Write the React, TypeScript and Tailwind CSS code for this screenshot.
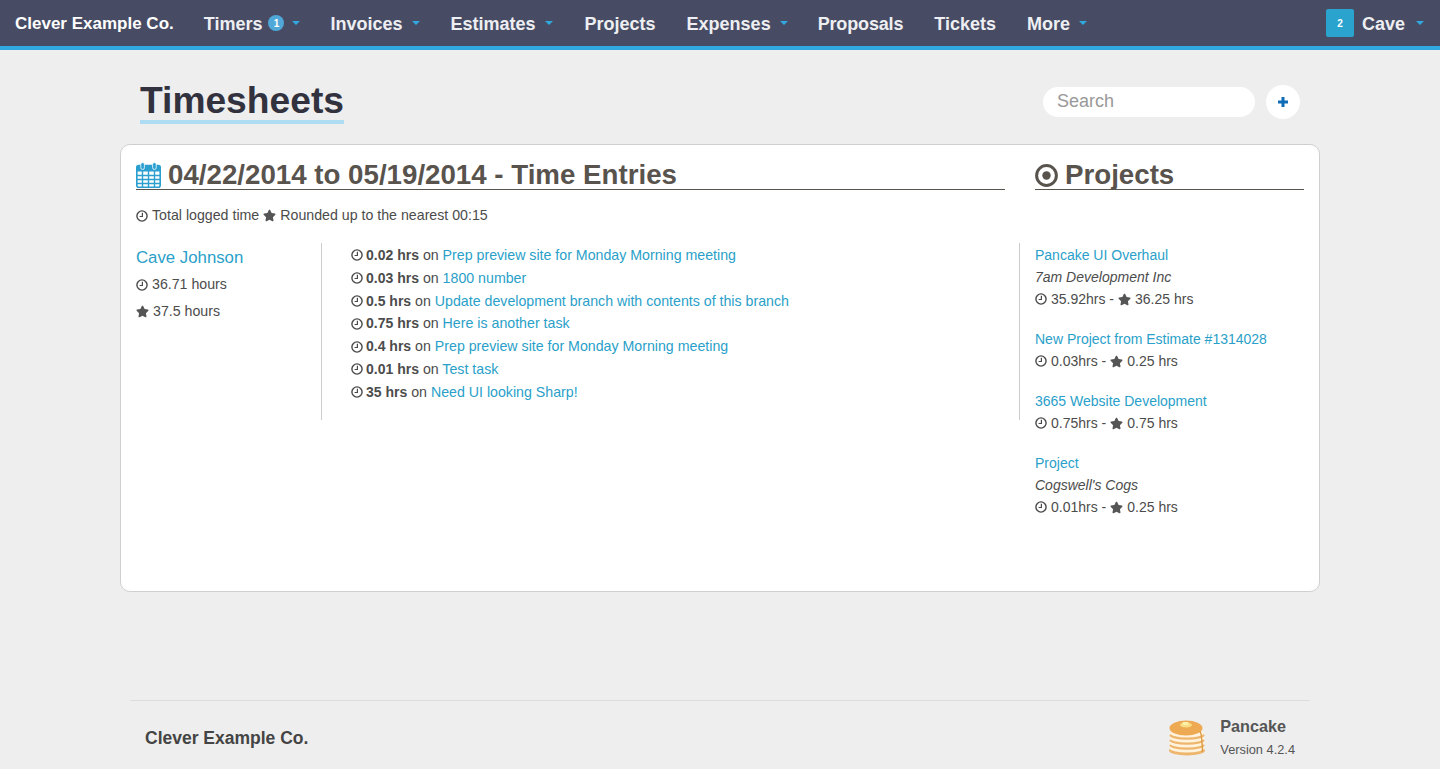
import { FaStar } from "react-icons/fa";

const navItems = [
  { label: "Timers", caret: true, badge: "1", extra: "mr-[-1px]" },
  { label: "Invoices", caret: true },
  { label: "Estimates", caret: true, extra: "mr-[1px]" },
  { label: "Projects" },
  { label: "Expenses", caret: true, extra: "mr-[-1px]" },
  { label: "Proposals", extra: "tracking-[-0.15px]" },
  { label: "Tickets" },
  { label: "More", caret: true },
];

const entries = [
  { hrs: "0.02 hrs", task: "Prep preview site for Monday Morning meeting" },
  { hrs: "0.03 hrs", task: "1800 number" },
  { hrs: "0.5 hrs", task: "Update development branch with contents of this branch" },
  { hrs: "0.75 hrs", task: "Here is another task" },
  { hrs: "0.4 hrs", task: "Prep preview site for Monday Morning meeting" },
  { hrs: "0.01 hrs", task: "Test task" },
  { hrs: "35 hrs", task: "Need UI looking Sharp!" },
];

const projects = [
  { name: "Pancake UI Overhaul", client: "7am Development Inc", logged: "35.92hrs", rounded: "36.25 hrs" },
  { name: "New Project from Estimate #1314028", logged: "0.03hrs", rounded: "0.25 hrs" },
  { name: "3665 Website Development", logged: "0.75hrs", rounded: "0.75 hrs" },
  { name: "Project", client: "Cogswell's Cogs", logged: "0.01hrs", rounded: "0.25 hrs" },
];

function Caret({ className = "ml-[9px]" }: { className?: string }) {
  return <span className={`${className} mt-[-3px] h-0 w-0 border-x-[4px] border-t-[4px] border-x-transparent border-t-[#2fa9e0]`} />;
}

function Clock() {
  return (
    <svg width="12" height="12" viewBox="0 0 12 12" className="shrink-0">
      <circle cx="6" cy="6" r="5.1" fill="none" stroke="#4a4a4a" strokeWidth="1.4" />
      <path d="M6.4 2.8v3.7H3.6" fill="none" stroke="#4a4a4a" strokeWidth="1.2" />
    </svg>
  );
}

function Star() {
  return <FaStar className="shrink-0 text-[13px] text-[#555]" />;
}

function TargetIcon() {
  return (
    <svg width="23" height="23" viewBox="0 0 23 23" className="mb-[2px] mr-[7px] shrink-0">
      <circle cx="11.5" cy="11.5" r="9.9" fill="none" stroke="#59534e" strokeWidth="3" />
      <circle cx="11.5" cy="11.5" r="4.2" fill="#59534e" />
    </svg>
  );
}

function CalendarIcon() {
  return (
    <svg width="25" height="26" viewBox="0 0 25 26" className="mb-[1px] mr-[7px] shrink-0">
      <rect x="0.8" y="3.5" width="23.4" height="21.7" rx="2" fill="#fff" stroke="#2a9fd0" strokeWidth="1.6" />
      <rect x="0.8" y="3.5" width="23.4" height="6" fill="#2a9fd0" />
      <path d="M1 13.5h23M1 17.5h23M1 21.5h23M6.5 9v16M12.5 9v16M18.5 9v16" stroke="#2a9fd0" strokeWidth="1.4" />
      <rect x="4.8" y="0.5" width="3.6" height="7" rx="1.8" fill="#2a9fd0" stroke="#fff" strokeWidth="0.8" />
      <rect x="16.6" y="0.5" width="3.6" height="7" rx="1.8" fill="#2a9fd0" stroke="#fff" strokeWidth="0.8" />
    </svg>
  );
}

function PancakeIcon() {
  return (
    <svg width="38" height="36" viewBox="0 0 38 36">
      <ellipse cx="19" cy="30.5" rx="18" ry="5" fill="#eeb56c" />
      <ellipse cx="19" cy="28.2" rx="17.5" ry="4.2" fill="#fff3de" />
      <ellipse cx="19" cy="25.5" rx="17.5" ry="4.2" fill="#eeb56c" />
      <ellipse cx="19" cy="23.2" rx="17.5" ry="4.2" fill="#fff3de" />
      <ellipse cx="19" cy="20.5" rx="17.5" ry="4.2" fill="#eeb56c" />
      <ellipse cx="19" cy="18.2" rx="17.5" ry="4.2" fill="#fff3de" />
      <ellipse cx="19" cy="15.5" rx="17.5" ry="4.2" fill="#eeb56c" />
      <ellipse cx="19" cy="13.2" rx="17" ry="4.2" fill="#fff3de" />
      <ellipse cx="18" cy="8" rx="16.5" ry="7.5" fill="#eeaa52" />
      <ellipse cx="18" cy="5" rx="6" ry="2.5" fill="#f8dd84" />
      <rect x="14.5" y="2" width="6" height="3" rx="1" fill="#fdf0a8" />
      <path d="M32 11c2 4 1.5 8 2 12s1 6 0 9" fill="none" stroke="#dc9a45" strokeWidth="1.4" />
    </svg>
  );
}

function SectionTitle({ icon, children }: { icon: React.ReactNode; children: React.ReactNode }) {
  return (
    <h2 className="flex h-[45px] items-end border-b border-[#59534e] text-[27.7px] leading-[28px] font-bold text-[#59534e]">
      {icon}
      {children}
    </h2>
  );
}

export default function App() {
  return (
    <div className="flex min-h-[769px] flex-col bg-[#eeeeee] font-['Liberation_Sans',Arial,sans-serif] text-[14.2px] text-[#4c4c4c]">
      <nav className="flex h-[50px] items-center border-b-[4px] border-[#2fa9e0] bg-[#474c64] pl-[15px] pr-[16px] pt-[2px] text-[18px] font-bold text-[#eeeff2]">
        <span className="mr-[30px] text-[17px] text-white">Clever Example Co.</span>
        <div className="flex items-center gap-[31px]">
          {navItems.map((item) => (
            <span key={item.label} className={`flex items-center ${item.extra ?? ""}`}>
              {item.label}
              {item.badge && (
                <span className="ml-[6px] mr-[-1px] mt-[-2px] flex h-[16px] w-[16px] items-center justify-center rounded-full bg-[#4fa8d8] text-[10px] text-white">
                  {item.badge}
                </span>
              )}
              {item.caret && <Caret />}
            </span>
          ))}
        </div>
        <div className="ml-auto flex items-center">
          <span className="mr-[8px] mt-[-2px] flex h-[28px] w-[28px] items-center justify-center rounded-[2px] bg-[#2aa3cf] text-[10px] text-white">2</span>
          Cave
          <Caret className="ml-[11px]" />
        </div>
      </nav>

      <header className="mx-auto flex h-[94px] w-[1160px] items-start justify-between pt-[31px]">
        <h1 className="border-b-[4px] border-[#aedcf3] text-[37.2px] leading-[39px] font-bold text-[#32323f]">Timesheets</h1>
        <div className="mt-[4px] flex items-center gap-[11px]">
          <div className="flex h-[30px] w-[212px] items-center rounded-full bg-white pb-[2px] pl-[14px] text-[18px] font-normal text-[#999]">Search</div>
          <div className="flex h-[34px] w-[34px] items-center justify-center rounded-full bg-white">
            <svg width="10" height="10" viewBox="0 0 10 10">
              <path d="M5 0v10M0 5h10" stroke="#0f6db8" strokeWidth="3" />
            </svg>
          </div>
        </div>
      </header>

      <main className="mx-auto h-[448px] w-[1200px] rounded-[10px] border border-[#cfcfcf] bg-white px-[15px]">
        <div className="flex gap-[30px]">
          <div className="w-[869px]">
            <SectionTitle icon={<CalendarIcon />}>04/22/2014 to 05/19/2014 - Time Entries</SectionTitle>
            <p className="mt-[17px] flex items-center gap-[4px] leading-[17px]">
              <Clock /> Total logged time <Star /> Rounded up to the nearest 00:15
            </p>
            <div className="mt-[19px] flex">
              <div className="h-[177px] w-[186px] border-r border-[#ccc]">
                <a className="block pt-[2px] text-[16.8px] leading-[26px] text-[#2a9fc9]">Cave Johnson</a>
                <p className="flex items-center gap-[4px] leading-[27px]"><Clock /> 36.71 hours</p>
                <p className="flex items-center gap-[4px] leading-[27px]"><Star /> 37.5 hours</p>
              </div>
              <ul className="pl-[29px] pt-[1px]">
                {entries.map((entry, i) => (
                  <li key={i} className="flex items-center gap-[3px] leading-[22.8px]">
                    <Clock />
                    <span>
                      <b className="text-[14px]">{entry.hrs}</b> on <a className="text-[#2a9fc9]">{entry.task}</a>
                    </span>
                  </li>
                ))}
              </ul>
            </div>
          </div>
          <div className="w-[269px] text-[14px]">
            <SectionTitle icon={<TargetIcon />}>Projects</SectionTitle>
            <div className="relative mt-[53px]">
              <div className="absolute left-[-16px] top-0 h-[177px] w-px bg-[#ccc]" />
              {projects.map((project) => (
                <div key={project.name} className="mb-[17px] pt-[1px] leading-[22px]">
                  <a className="block text-[#2a9fc9]">{project.name}</a>
                  {project.client && <em className="block">{project.client}</em>}
                  <p className="flex items-center gap-[4px]">
                    <Clock /> {project.logged} - <Star /> {project.rounded}
                  </p>
                </div>
              ))}
            </div>
          </div>
        </div>
      </main>

      <footer className="mx-auto mt-[108px] flex h-[69px] w-[1180px] items-center justify-between border-t border-[#ddd] px-[15px] pt-[6px]">
        <span className="text-[17.5px] font-bold text-[#444]">Clever Example Co.</span>
        <div className="flex items-center gap-[14px]">
          <PancakeIcon />
          <div>
            <p className="mt-[-1px] text-[16.2px] leading-[22px] font-bold text-[#555]">Pancake</p>
            <p className="mt-[3px] text-[12.8px] leading-[20px] text-[#555]">Version 4.2.4</p>
          </div>
        </div>
      </footer>
    </div>
  );
}
